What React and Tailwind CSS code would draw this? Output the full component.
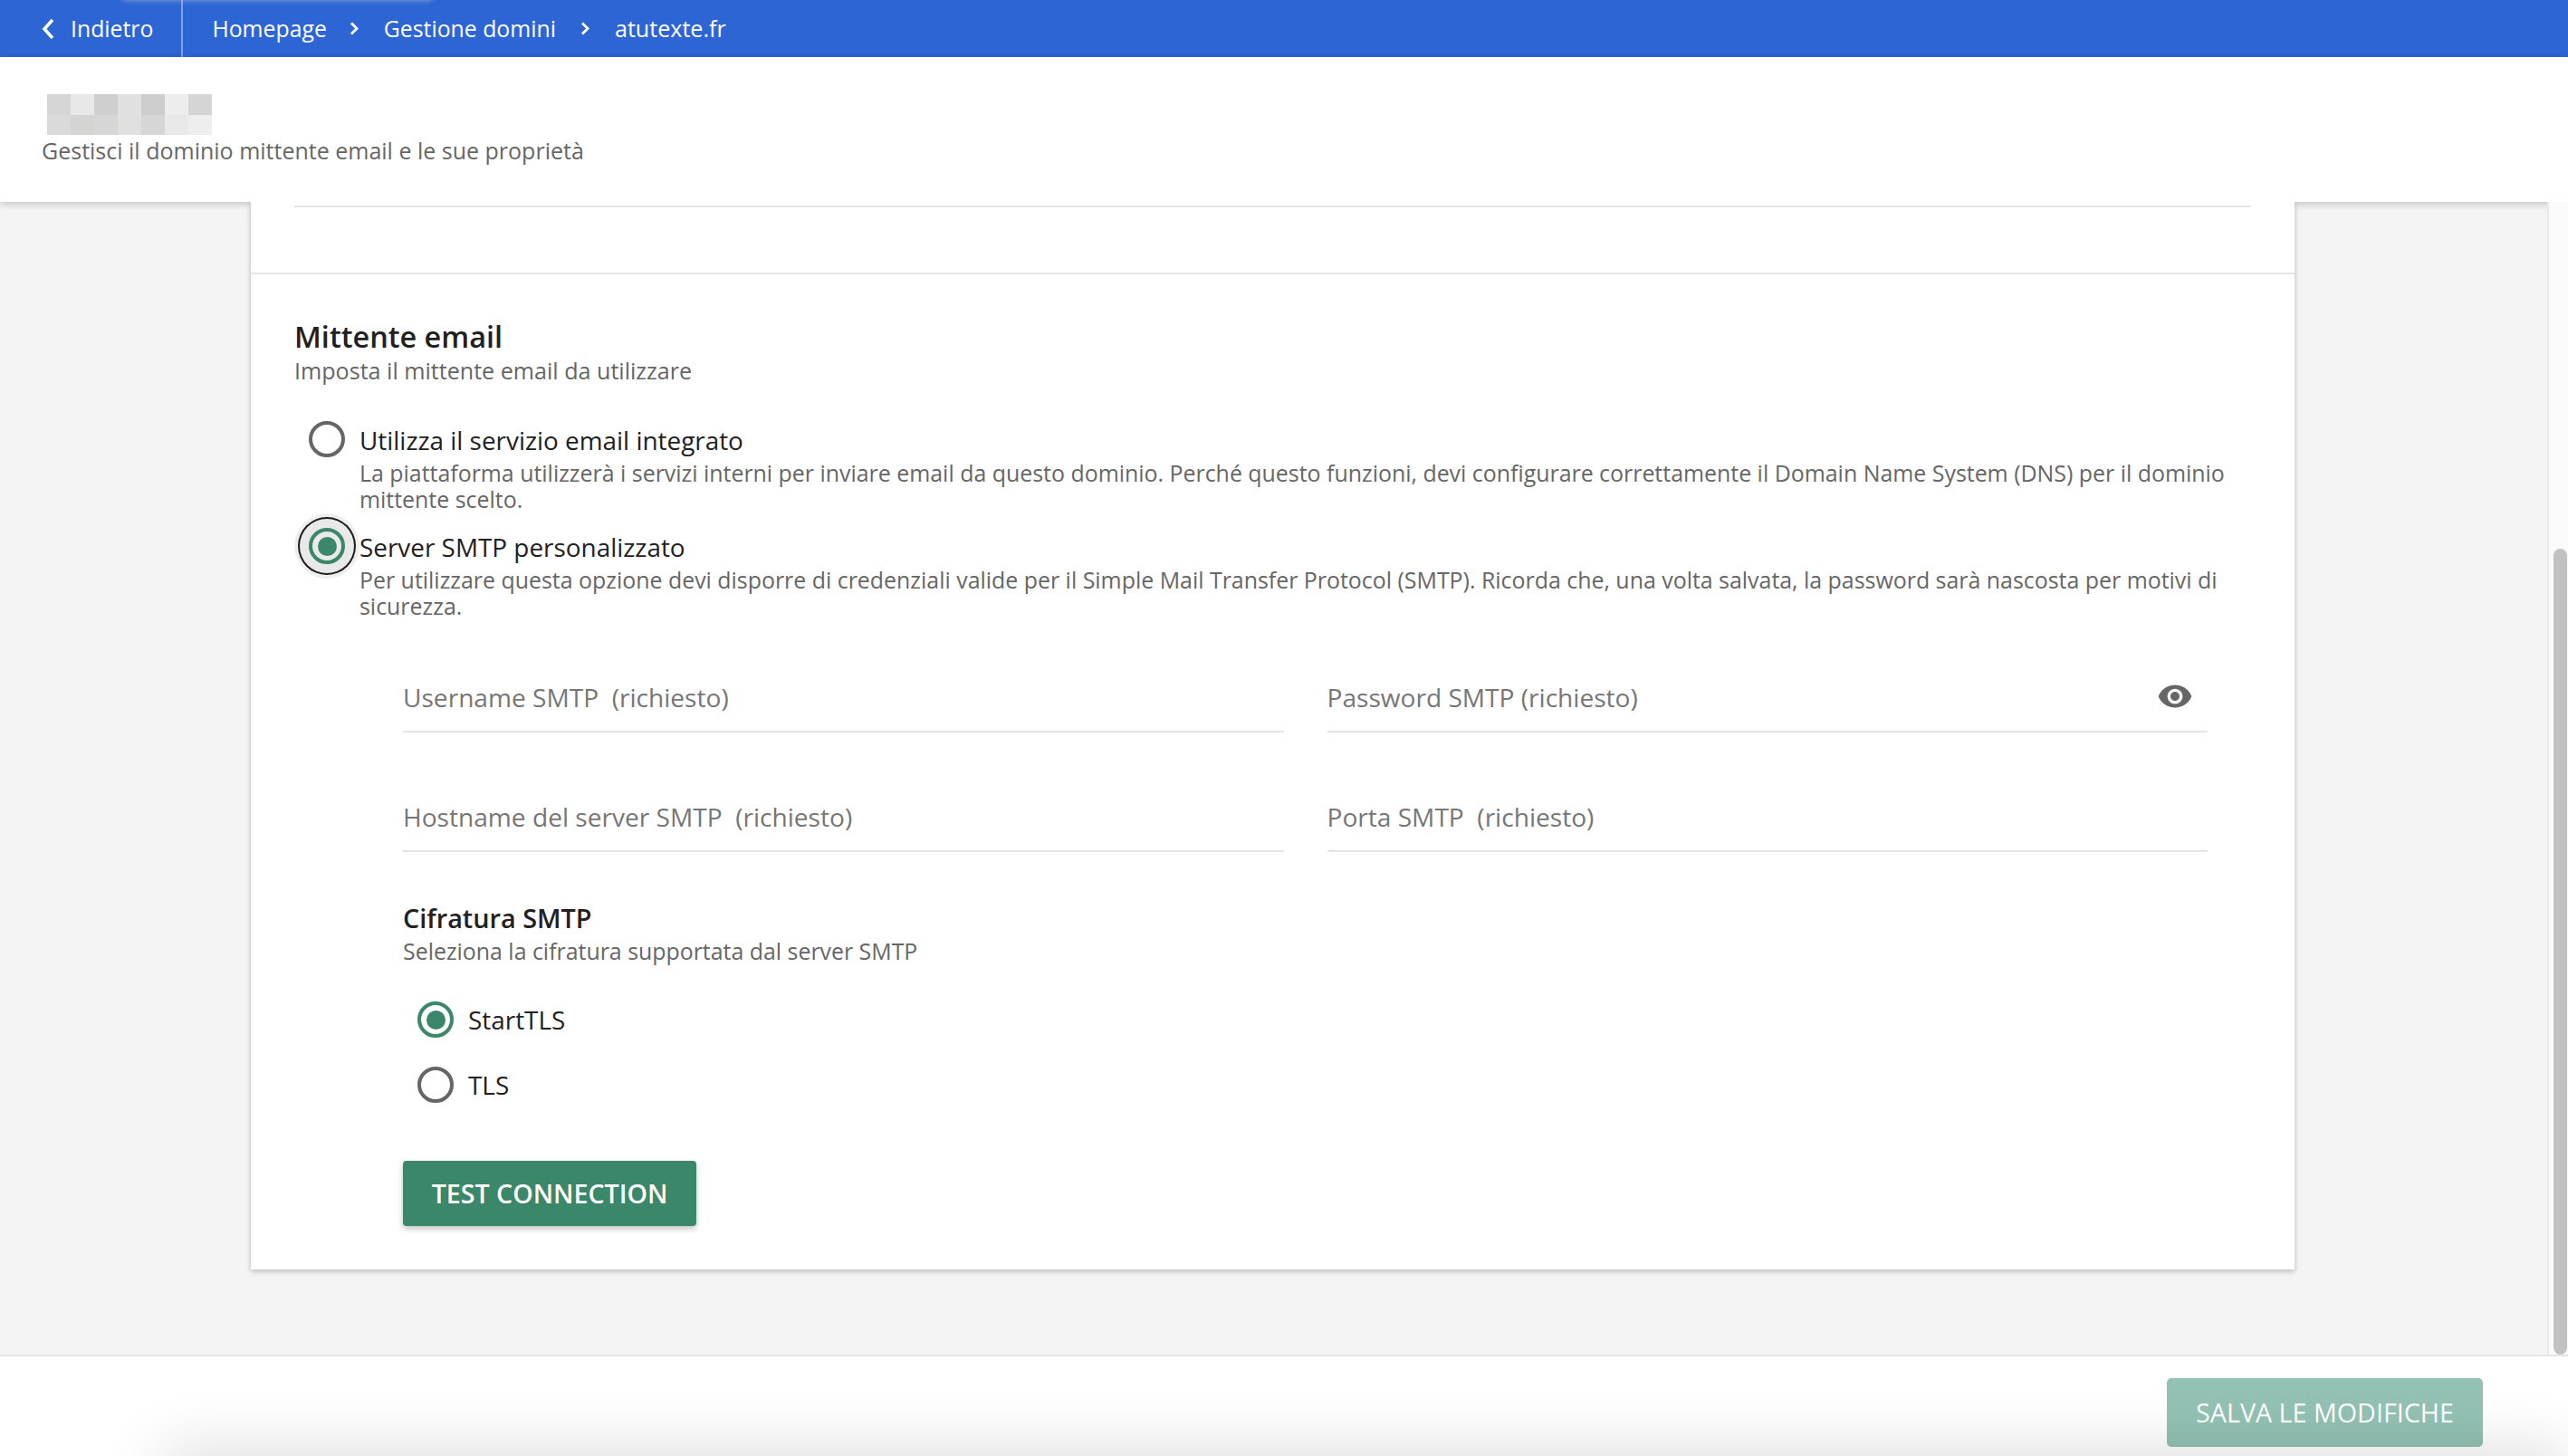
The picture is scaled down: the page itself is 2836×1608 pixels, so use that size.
import React from 'react';

const logoCells = [
  'bg-[#d6d6d6]', 'bg-[#e8e8e8]', 'bg-[#cfcfcf]', 'bg-[#e0e0e0]', 'bg-[#cdcdcd]', 'bg-[#ededed]', 'bg-[#d5d5d5]',
  'bg-[#dadada]', 'bg-[#d4d4d2]', 'bg-[#d6d6d6]', 'bg-[#e0e0de]', 'bg-[#d6d6d6]', 'bg-[#e9e9e9]', 'bg-[#eeeeee]',
];

function Chevron({ className = '' }) {
  return (
    <svg width="13" height="15" viewBox="0 0 13 15" fill="none" className={`shrink-0 ${className}`}>
      <path d="M2 1.5 L8 7.5 L2 13.5" stroke="#ffffff" strokeWidth="2.8" />
    </svg>
  );
}

function Radio({ checked, focused }) {
  const ring = checked ? 'border-[#3b8769]' : 'border-[#666666]';
  const focus = focused
    ? 'bg-[#eaeaea] shadow-[0_0_0_10px_#e9e9e9,0_0_0_12px_#1c1c1c,0_0_0_16px_#efefef]'
    : 'bg-white';
  return (
    <span className={`flex h-[40px] w-[40px] shrink-0 items-center justify-center rounded-full border-[4px] ${ring} ${focus}`}>
      {checked && <span className="h-[21px] w-[21px] rounded-full bg-[#3b8769]" />}
    </span>
  );
}

function Option({ checked, focused, title, children, className = '' }) {
  return (
    <div className={`flex items-start pl-[16px] ${className}`}>
      <span className="-mt-px">
        <Radio checked={checked} focused={focused} />
      </span>
      <div className="ml-[16px] flex-1">
        <div className="text-[27.9px] leading-[40px] text-[#212121]">{title}</div>
        <p className="mt-[2px] text-[24.92px] leading-[29px] text-[#666666]">{children}</p>
      </div>
    </div>
  );
}

function Field({ label, eye }) {
  return (
    <div className="relative h-[59px] border-b-2 border-[#e4e4e4] text-[28.1px] leading-[40px] whitespace-pre text-[#767676]">
      {label}
      {eye && (
        <svg width="40" height="40" viewBox="0 0 24 24" fill="#666666" className="absolute -top-px right-[16px]">
          <path d="M12 4.5C7 4.5 2.73 7.61 1 12c1.73 4.39 6 7.5 11 7.5s9.27-3.11 11-7.5c-1.73-4.39-6-7.5-11-7.5zM12 17c-2.76 0-5-2.24-5-5s2.24-5 5-5 5 2.24 5 5-2.24 5-5 5zm0-8c-1.66 0-3 1.34-3 3s1.34 3 3 3 3-1.34 3-3-1.34-3-3-3z" />
        </svg>
      )}
    </div>
  );
}

function TlsRow({ checked, label }) {
  return (
    <div className="flex h-[40px] items-center pl-[16px]">
      <Radio checked={checked} />
      <span className="ml-[16px] text-[27.9px] leading-[40px] text-[#212121]">{label}</span>
    </div>
  );
}

export default function App() {
  return (
    <div className="relative flex h-[1608px] w-[2836px] flex-col overflow-hidden bg-white font-['Open_Sans',sans-serif]">
      {/* Top navigation */}
      <nav className="flex h-[63px] shrink-0 items-stretch bg-[#2d66d4] text-[24.8px] font-medium text-white">
        <div className="flex items-center gap-[18px] border-r-2 border-[#7fa3e4] pr-[31px] pl-[46px]">
          <svg width="14" height="24" viewBox="0 0 14 24" fill="none" className="shrink-0">
            <path d="M12 2 L3 12 L12 22" stroke="#ffffff" strokeWidth="3.6" />
          </svg>
          <span>Indietro</span>
        </div>
        <div className="flex items-center gap-[25px] pl-[32px]">
          <span>Homepage</span>
          <Chevron />
          <span>Gestione domini</span>
          <Chevron className="ml-[2px]" />
          <span className="text-[25.1px]">atutexte.fr</span>
        </div>
      </nav>

      {/* Soft shadow bleeding in at the top edge */}
      <div className="pointer-events-none absolute -top-[8px] left-[135px] z-30 h-[8px] w-[343px] rounded-full shadow-[0_0_6px_rgba(210,210,210,0.6)]" />

      {/* Page header */}
      <header className="relative z-10 h-[160px] shrink-0 bg-white pt-[41px] pl-[46px] shadow-[0_2px_8px_rgba(0,0,0,0.22)]">
        <div className="ml-[6px] grid h-[45px] w-[182px] grid-cols-7 grid-rows-2">
          {logoCells.map((c, i) => (
            <span key={i} className={c} />
          ))}
        </div>
        <p className="mt-[2px] text-[25px] leading-[30px] text-[#666666]">Gestisci il dominio mittente email e le sue proprietà</p>
      </header>

      {/* Main + scrollbar */}
      <div className="flex min-h-0 flex-1">
        <main className="min-w-0 flex-1 overflow-hidden bg-[#f4f4f4] pl-[277px] pr-[279px]">
          <section className="relative z-20 bg-white shadow-[0_2px_6px_rgba(0,0,0,0.25)]">
            <div className="border-b-2 border-[#e5e5e5] px-[48px] pt-[4px] pb-[72px]">
              <div className="h-[2px] bg-[#e4e4e4]" />
            </div>
            <div className="px-[48px] pt-[46px] pb-[48px]">
              <h2 className="text-[32.4px] leading-[45px] font-[550] text-[#212121]">Mittente email</h2>
              <p className="text-[25.1px] leading-[30px] text-[#666666]">Imposta il mittente email da utilizzare</p>

              <Option title="Utilizza il servizio email integrato" className="mt-[42px]">
                La piattaforma utilizzerà i servizi interni per inviare email da questo dominio. Perché questo funzioni, devi configurare correttamente il Domain Name System (DNS) per il dominio mittente scelto.
              </Option>
              <Option checked focused title="Server SMTP personalizzato" className="mt-[18px]">
                Per utilizzare questa opzione devi disporre di credenziali valide per il Simple Mail Transfer Protocol (SMTP). Ricorda che, una volta salvata, la password sarà nascosta per motivi di sicurezza.
              </Option>

              <div className="mt-[66px] pr-[48px] pl-[120px]">
                <div className="grid grid-cols-2 gap-x-[48px] gap-y-[73px]">
                  <Field label="Username SMTP  (richiesto)" />
                  <Field label="Password SMTP (richiesto)" eye />
                  <Field label="Hostname del server SMTP  (richiesto)" />
                  <Field label="Porta SMTP  (richiesto)" />
                </div>

                <h3 className="mt-[55px] text-[28.8px] leading-[36px] font-[550] text-[#212121]">Cifratura SMTP</h3>
                <p className="mt-[3px] text-[24.9px] leading-[30px] text-[#666666]">Seleziona la cifratura supportata dal server SMTP</p>

                <div className="mt-[41px] flex flex-col gap-[32px]">
                  <TlsRow checked label="StartTLS" />
                  <TlsRow label="TLS" />
                </div>

                <button className="mt-[64px] flex h-[72px] w-[324px] items-center justify-center rounded-[4px] bg-[#3b8769] text-[28.6px] font-semibold text-white shadow-[0_3px_6px_rgba(0,0,0,0.25)]">
                  TEST CONNECTION
                </button>
              </div>
            </div>
          </section>
        </main>
        <aside className="relative z-20 w-[23px] shrink-0 border-l-2 border-[#e8e8e8] bg-[#fafafa] pt-[383px] pl-[5px]">
          <div className="h-[890px] w-[15px] rounded-full bg-[#c1c1c1]" />
        </aside>
      </div>

      {/* Footer */}
      <footer className="flex h-[112px] shrink-0 justify-end border-t-2 border-[#e5e5e5] bg-white pt-[24px] pr-[94px]">
        <button className="h-[76px] w-[349px] rounded-[5px] bg-[#93c2b4] text-[28.7px] text-white">SALVA LE MODIFICHE</button>
      </footer>

      {/* Shadow cast from something just below the fold */}
      <div className="pointer-events-none absolute top-[1608px] right-0 left-[180px] z-30 h-[40px] shadow-[0_0_70px_rgba(0,0,0,0.2)]" />
    </div>
  );
}
